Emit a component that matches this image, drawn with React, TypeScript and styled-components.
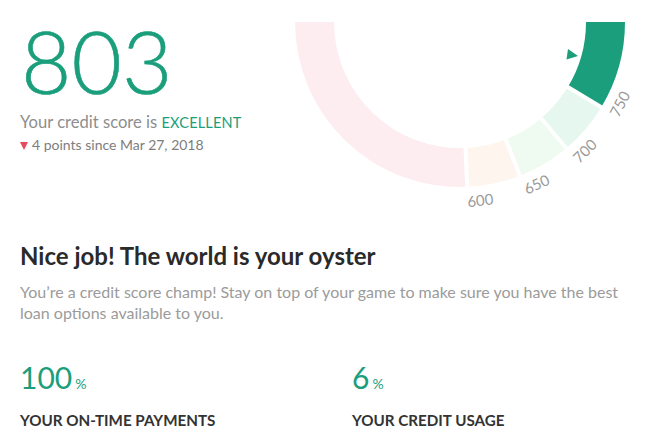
import styled, { createGlobalStyle } from "styled-components";

const GREEN = "#1a9e7b";

const GlobalStyle = createGlobalStyle`
  html, body {
    margin: 0;
    padding: 0;
    background: #fff;
  }
  body {
    font-family: Lato, "Open Sans", sans-serif;
  }
`;

// gauge geometry, in page coordinates
const CX = 460;
const CY = 22;
const R_OUT = 165;
const R_IN = 126;

type Band = { from: number; to: number; color: string };

const bands: Band[] = [
  { from: 0, to: 92.5, color: "#fdedf0" },
  { from: 92.5, to: 111.3, color: "#fef6ee" },
  { from: 111.3, to: 130.1, color: "#effaf0" },
  { from: 130.1, to: 148.9, color: "#e6f7ef" },
  { from: 148.9, to: 180, color: GREEN },
];

const ticks = [
  { label: "600", angle: 92.5 },
  { label: "650", angle: 111.3 },
  { label: "700", angle: 130.1 },
  { label: "750", angle: 148.9 },
];

function pt(angle: number, r: number) {
  const a = (angle * Math.PI) / 180;
  return [CX - r * Math.cos(a), CY + r * Math.sin(a)];
}

function sector(from: number, to: number) {
  const [x1, y1] = pt(from, R_OUT);
  const [x2, y2] = pt(to, R_OUT);
  const [x3, y3] = pt(to, R_IN);
  const [x4, y4] = pt(from, R_IN);
  return `M${x1} ${y1} A${R_OUT} ${R_OUT} 0 0 0 ${x2} ${y2} L${x3} ${y3} A${R_IN} ${R_IN} 0 0 1 ${x4} ${y4} Z`;
}

function Gauge() {
  return (
    <GaugeSvg viewBox="276 0 394 220" width={394} height={220}>
      {bands.map((b) => (
        <path key={b.from} d={sector(b.from, b.to)} fill={b.color} />
      ))}
      {ticks.map((t) => {
        const [x1, y1] = pt(t.angle, R_IN - 4);
        const [x2, y2] = pt(t.angle, R_OUT + 4);
        return (
          <line
            key={t.label}
            x1={x1}
            y1={y1}
            x2={x2}
            y2={y2}
            stroke="#fff"
            strokeWidth={4}
          />
        );
      })}
      {ticks.map((t) => {
        const a = t.angle + 4;
        const [x, y] = pt(a, 179);
        return (
          <TickLabel
            key={t.label}
            x={x}
            y={y}
            textAnchor="middle"
            dominantBaseline="central"
            transform={`rotate(${90 - a} ${x} ${y})`}
          >
            {t.label}
          </TickLabel>
        );
      })}
      <polygon points="568,49 566.5,59.5 578,56" fill={GREEN} />
    </GaugeSvg>
  );
}

export default function App() {
  return (
    <>
      <GlobalStyle />
      <Page>
        <TopRow>
          <ScoreBlock>
            <Score>803</Score>
            <Rating>
              Your credit score is <Grade>EXCELLENT</Grade>
            </Rating>
            <Change>
              <DownArrow />4 points since Mar 27, 2018
            </Change>
          </ScoreBlock>
          <Gauge />
        </TopRow>
        <Heading>Nice job! The world is your oyster</Heading>
        <Body>
          You’re a credit score champ! Stay on top of your game to make sure
          you have the best loan options available to you.
        </Body>
        <Stats>
          <Stat>
            <StatValue>
              100<Unit>%</Unit>
            </StatValue>
            <StatLabel>Your on-time payments</StatLabel>
          </Stat>
          <Stat>
            <StatValue>
              6<Unit>%</Unit>
            </StatValue>
            <StatLabel>Your credit usage</StatLabel>
          </Stat>
        </Stats>
      </Page>
    </>
  );
}

const Page = styled.main`
  width: 670px;
  height: 435px;
  box-sizing: border-box;
  padding-left: 20px;
  overflow: hidden;
`;

const TopRow = styled.section`
  display: flex;
  height: 220px;
`;

const ScoreBlock = styled.div`
  display: flex;
  flex-direction: column;
  padding-top: 8.6px;
`;

const Score = styled.div`
  font-size: 87px;
  line-height: 1.2;
  font-weight: 300;
  -webkit-text-stroke: 0.6px ${GREEN};
  color: ${GREEN};
  margin-left: 1px;
`;

const Rating = styled.div`
  margin-top: 0.4px;
  font-size: 16.6px;
  line-height: 1.2;
  color: #8e8e8e;
`;

const Grade = styled.span`
  font-size: 14.5px;
  letter-spacing: 0.2px;
  color: ${GREEN};
`;

const Change = styled.div`
  display: flex;
  align-items: center;
  margin-top: 4px;
  font-size: 14px;
  line-height: 1.2;
  color: #7d7d7d;
`;

const DownArrow = styled.span`
  width: 0;
  height: 0;
  margin-right: 4px;
  border-left: 4px solid transparent;
  border-right: 4px solid transparent;
  border-top: 8px solid #e84a5f;
`;

const GaugeSvg = styled.svg`
  display: block;
  flex: none;
  margin-left: auto;
`;

const TickLabel = styled.text`
  font-family: Lato, sans-serif;
  font-size: 15px;
  fill: #9a9a9a;
`;

const Heading = styled.h1`
  margin: 23px 0 0;
  font-size: 24px;
  line-height: 26px;
  font-weight: 700;
  color: #2a2a2a;
`;

const Body = styled.p`
  margin: 12px 0 0;
  width: 620px;
  font-size: 16px;
  line-height: 21px;
  color: #9b9b9b;
`;

const Stats = styled.section`
  display: grid;
  grid-template-columns: 332px 1fr;
  margin-top: 36px;
`;

const Stat = styled.div`
  display: flex;
  flex-direction: column;
`;

const StatValue = styled.div`
  font-size: 30px;
  line-height: 36px;
  font-weight: 400;
  color: ${GREEN};
`;

const Unit = styled.span`
  margin-left: 3px;
  font-size: 14px;
`;

const StatLabel = styled.div`
  margin-top: 8px;
  font-size: 15.2px;
  line-height: 20px;
  font-weight: 700;
  text-transform: uppercase;
  color: #333;
`;
